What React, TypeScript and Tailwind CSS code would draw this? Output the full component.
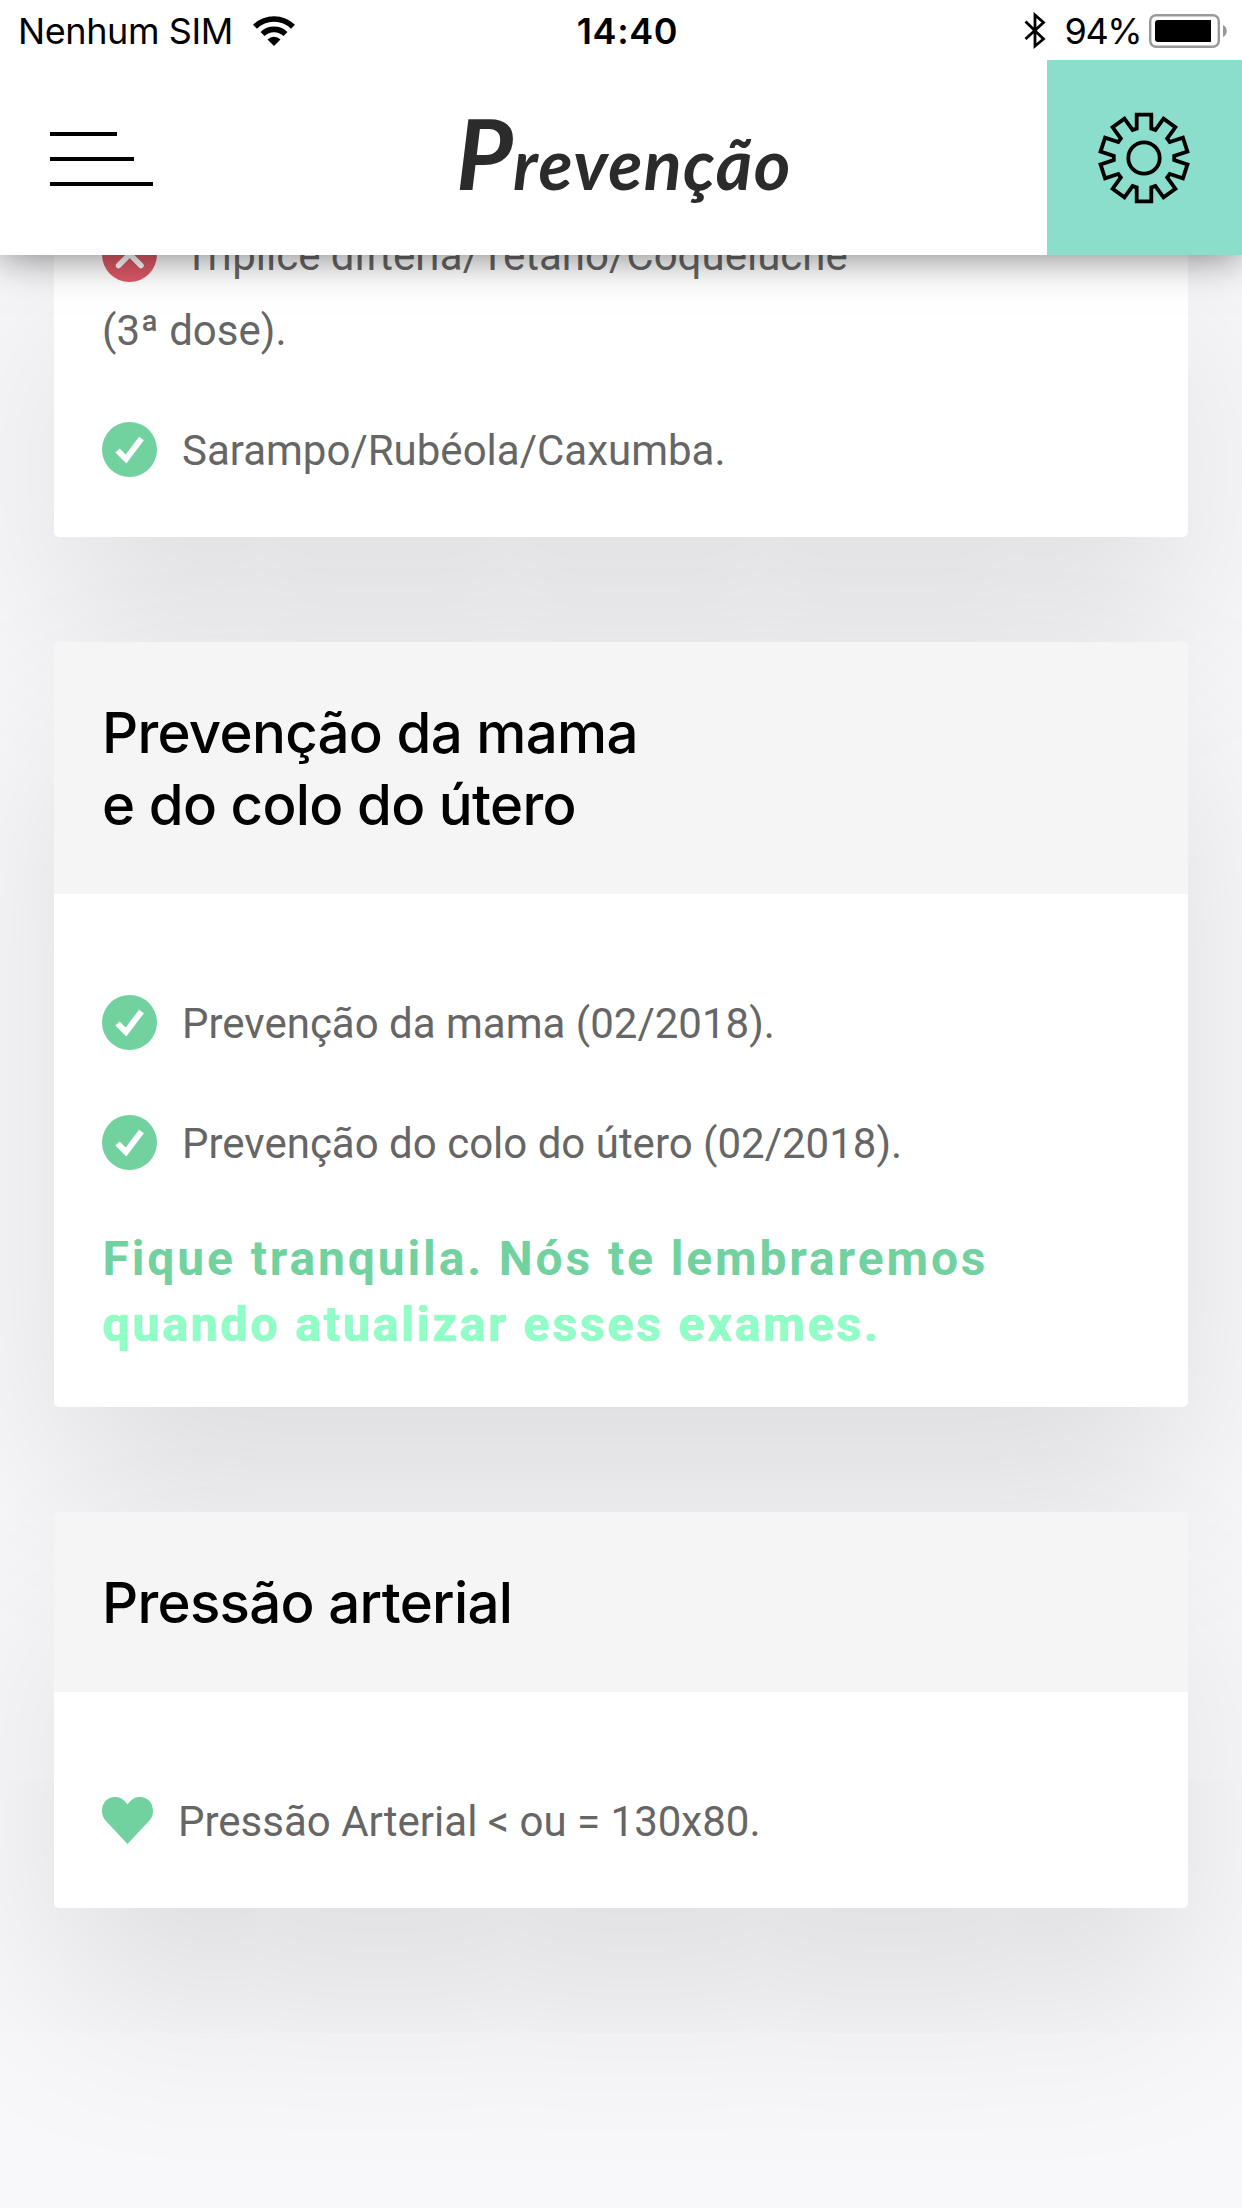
import React from "react";

function CheckIcon() {
  return (
    <svg viewBox="0 0 55 55" className="h-[55px] w-[55px] shrink-0">
      <circle cx="27.5" cy="27.5" r="27.5" fill="#71d2a0" />
      <path d="M15.5 28.5 L24 37 L39.5 16.5" fill="none" stroke="#fff" strokeWidth="6" />
    </svg>
  );
}

function CrossIcon() {
  return (
    <svg viewBox="0 0 55 55" className="h-[55px] w-[55px] shrink-0">
      <circle cx="27.5" cy="27.5" r="27.5" fill="#dc5866" />
      <path d="M16.5 16 L39 38.5 M39 16 L16.5 38.5" fill="none" stroke="#fff" strokeWidth="5.5" strokeLinecap="round" />
    </svg>
  );
}

function HeartIcon() {
  return (
    <svg viewBox="0 0 51 47" className="h-[47px] w-[51px] shrink-0">
      <path d="M25.5 47 L4 24 C1 20.8 0 18 0 14 C0 5.5 5.5 0 13 0 C18.5 0 22 2.5 25.5 7.5 C29 2.5 32.5 0 38 0 C45.5 0 51 5.5 51 14 C51 18 50 20.8 47 24 Z" fill="#71d2a0" />
    </svg>
  );
}

function WifiIcon() {
  return (
    <svg viewBox="0 0 42 30" className="h-[30px] w-[42px]">
      <path d="M2 10.8 A27 27 0 0 1 40 10.8" fill="none" stroke="#000" strokeWidth="5.6" />
      <path d="M9.5 18 A16.5 16.5 0 0 1 32.5 18" fill="none" stroke="#000" strokeWidth="5.6" />
      <path d="M21 30 L14.5 23.5 A9.2 9.2 0 0 1 27.5 23.5 Z" fill="#000" />
    </svg>
  );
}

function GearIcon() {
  const tooth = [
    [-7.3, -29.4],
    [-7.3, -43.3],
    [7.3, -43.3],
    [7.3, -29.4],
  ];
  const points: string[] = [];
  for (let i = 0; i < 10; i++) {
    const a = (i * Math.PI) / 5;
    for (const [x, y] of tooth) {
      points.push(
        `${(x * Math.cos(a) - y * Math.sin(a)).toFixed(2)},${(x * Math.sin(a) + y * Math.cos(a)).toFixed(2)}`,
      );
    }
  }
  return (
    <svg viewBox="-46 -46 92 92" className="mr-px h-[92px] w-[92px]">
      <polygon points={points.join(" ")} fill="none" stroke="#000" strokeWidth="3.8" />
      <circle r="15.7" fill="none" stroke="#000" strokeWidth="3.8" />
    </svg>
  );
}

function StatusBar() {
  return (
    <div className="grid h-[60px] grid-cols-3 items-center bg-white font-['Inter'] text-[36px] leading-[60px] text-black">
      <div className="flex items-center pl-[18px]">
        <span className="pt-px tracking-[-0.4px]">Nenhum SIM</span>
        <span className="ml-[20px]"><WifiIcon /></span>
      </div>
      <div className="pt-px pl-[13px] text-center font-semibold tracking-[0.6px]">14:40</div>
      <div className="flex items-center justify-end pr-[15px]">
        <svg viewBox="0 0 22 37" className="mr-[19px] h-[37px] w-[22px]">
          <path d="M1.5 9.5 L19.5 27 L11 34 V3 L19.5 10.5 L1.5 27" fill="none" stroke="#000" strokeWidth="2.8" />
        </svg>
        <span className="mr-[8px] pt-px tracking-[-1.5px]">94%</span>
        <svg viewBox="0 0 78 34" className="h-[34px] w-[78px]">
          <rect x="1.2" y="1.2" width="68.6" height="31.6" rx="6" fill="none" stroke="#999" strokeWidth="2.4" />
          <path d="M9 6 H62 V28 H9 Q6 28 6 25 V9 Q6 6 9 6 Z" fill="#000" />
          <path d="M74 11 C79 13 79 21 74 23 Z" fill="#999" />
        </svg>
      </div>
    </div>
  );
}

function TopBar() {
  return (
    <div className="flex h-[195px] items-center bg-white">
      <button className="flex w-[195px] flex-col gap-[21px] pt-[3px] pl-[50px]" aria-label="Menu">
        <span className="h-[4px] w-[67px] bg-black" />
        <span className="h-[4px] w-[84px] bg-black" />
        <span className="h-[4px] w-[103px] bg-black" />
      </button>
      <h1 className="flex flex-1 items-baseline justify-center pl-[6px] font-['Lato'] font-bold italic leading-[100px] text-[#2b2b2b]">
        <span className="text-[98px]">P</span>
        <span className="text-[70px] tracking-[1.5px]">revenção</span>
      </h1>
      <button className="flex h-[195px] w-[195px] items-center justify-center bg-[#8adecb]" aria-label="Ajustes">
        <GearIcon />
      </button>
    </div>
  );
}

function Card({ title, className = "", children }: { title?: React.ReactNode; className?: string; children: React.ReactNode }) {
  return (
    <section className="rounded-[5px] bg-white shadow-[0_90px_190px_rgba(0,0,0,0.11)]">
      {title && (
        <h2 className="rounded-t-[5px] bg-[#f5f5f5] px-[48px] pt-[55px] pb-[53px] font-['Inter'] text-[56.4px] font-medium leading-[72px] tracking-[-0.7px] text-black">
          {title}
        </h2>
      )}
      <div className={`px-[48px] font-['Roboto'] text-[42px] leading-[75px] text-[#666] ${className}`}>{children}</div>
    </section>
  );
}

function Item({ icon, children }: { icon: React.ReactNode; children: React.ReactNode }) {
  return (
    <div className="flex h-[75px] items-center gap-[25px]">
      {icon}
      <span className="whitespace-nowrap pt-px">{children}</span>
    </div>
  );
}

export default function App() {
  return (
    <div className="flex h-[2208px] w-[1242px] flex-col overflow-hidden bg-[#f8f8fa]">
      <header className="relative z-10 shadow-[0_0_40px_rgba(0,0,0,0.55)]">
        <StatusBar />
        <TopBar />
      </header>
      <main className="-mt-[38px] flex flex-col gap-[105px] px-[54px]">
        <Card className="pb-[50px]">
          <Item icon={<CrossIcon />}><span className="ml-[2px]">Tríplice difteria/Tétano/Coqueluche</span></Item>
          <p className="h-[75px] pt-px">(3ª dose).</p>
          <div className="mt-[45px]"><Item icon={<CheckIcon />}>Sarampo/Rubéola/Caxumba.</Item></div>
        </Card>
        <Card title={<>Prevenção da mama<br />e do colo do útero</>} className="flex flex-col gap-[45px] pt-[91px] pb-[49px]">
          <Item icon={<CheckIcon />}>Prevenção da mama (02/2018).</Item>
          <Item icon={<CheckIcon />}>Prevenção do colo do útero (02/2018).</Item>
          <p className="mt-[1px] ml-[0.5px] whitespace-nowrap text-[48px] font-bold leading-[66px] tracking-[2.88px] text-[#71d2a0]">
            Fique tranquila. Nós te lembraremos<br />
            <span className="text-[#90ffc7] [text-shadow:0_0_1px_#71d2a0]">quando atualizar esses exames.</span>
          </p>
        </Card>
        <Card title="Pressão arterial" className="pt-[91px] pb-[50px]">
          <Item icon={<HeartIcon />}>Pressão Arterial &lt; ou = 130x80.</Item>
        </Card>
      </main>
    </div>
  );
}
